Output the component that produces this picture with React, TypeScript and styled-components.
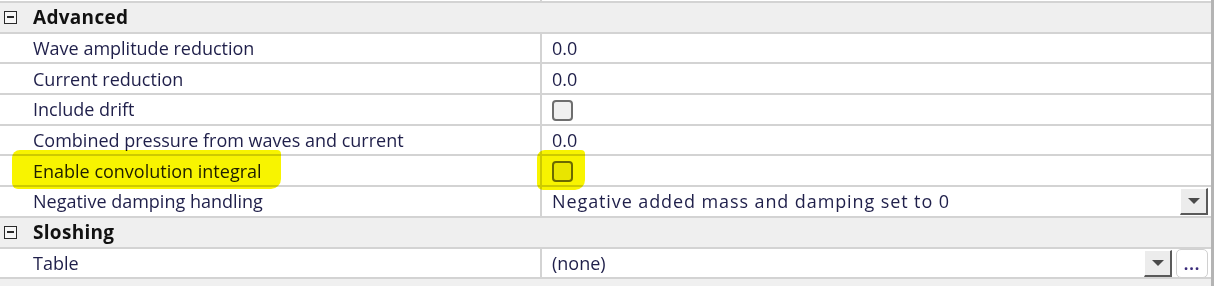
import React from "react";
import styled, { createGlobalStyle } from "styled-components";

const GlobalStyle = createGlobalStyle`
  html, body {
    margin: 0;
    padding: 0;
    background: #ffffff;
  }
  body {
    font-family: "Open Sans", "Noto Sans", sans-serif;
  }
`;

const LINE = "#d3d3d3";
const ROW_H = 28.7;

const Frame = styled.div`
  position: relative;
  width: 1218px;
  height: 286px;
  overflow: hidden;
  background: #ffffff;
`;

const Grid = styled.div`
  width: 1211px;
  height: 286px;
  background: #f0f0f0;
  border-right: 3px solid #b4b4b4;
  display: flex;
  flex-direction: column;
`;

const TopStrip = styled.div`
  height: 1px;
  display: grid;
  grid-template-columns: 540px 1fr;
  background: #ffffff;
  border-bottom: 2px solid ${LINE};
  & > div + div {
    border-left: 2px solid ${LINE};
  }
`;

const CategoryRow = styled.div`
  height: ${ROW_H}px;
  border-bottom: 2px solid ${LINE};
  background: #efefef;
  display: flex;
  align-items: center;
  padding-left: 4px;
  gap: 16px;
`;

const ToggleBox = styled.span`
  width: 11px;
  height: 11px;
  border: 1.5px solid #2a2a2a;
  position: relative;
  background: #f7f7f7;
  &::after {
    content: "";
    position: absolute;
    left: 2px;
    right: 2px;
    top: 4.5px;
    height: 2px;
    background: #2a2a2a;
  }
`;

const CategoryLabel = styled.span`
  font-size: 19px;
  font-weight: 700;
  color: #111111;
  letter-spacing: 0.3px;
`;

const PropertyRow = styled.div`
  height: ${ROW_H}px;
  border-bottom: 2px solid ${LINE};
  background: #ffffff;
  display: grid;
  grid-template-columns: 540px 1fr;
`;

const LabelCell = styled.div`
  display: flex;
  align-items: center;
  padding-left: 33px;
  font-size: 18px;
  color: #1f1f4a;
  white-space: nowrap;
`;

const ValueCell = styled.div`
  display: flex;
  align-items: center;
  border-left: 2px solid ${LINE};
  padding-left: 10px;
  padding-right: 3px;
  font-size: 18px;
  color: #1f1f4a;
  gap: 4px;
`;

const ValueText = styled.span<{ $wide?: boolean }>`
  flex: 1;
  white-space: nowrap;
  letter-spacing: ${(p) => (p.$wide ? "0.9px" : "0")};
`;

const Check = styled.span`
  width: 17px;
  height: 17px;
  border: 2px solid #6e6e6e;
  border-radius: 4px;
  background: #f0f0f0;
  margin-top: 2px;
`;

const DropButton = styled.span`
  width: 28px;
  height: 27px;
  box-sizing: border-box;
  background: #ececec;
  border-top: 1px solid #ffffff;
  border-left: 1px solid #ffffff;
  border-right: 2px solid #5a5a5a;
  border-bottom: 2px solid #5a5a5a;
  display: flex;
  align-items: center;
  justify-content: center;
  &::after {
    content: "";
    border-left: 6px solid transparent;
    border-right: 6px solid transparent;
    border-top: 6px solid #4a4a4a;
  }
`;

const EllipsisButton = styled.span`
  width: 32px;
  height: 29px;
  box-sizing: border-box;
  border: 1px solid #d0d0d0;
  border-radius: 5px;
  background: #ffffff;
  display: flex;
  align-items: flex-end;
  justify-content: center;
  padding-bottom: 5px;
  font-size: 16px;
  font-weight: 700;
  letter-spacing: 1px;
  color: #3a2a7a;
  line-height: 1;
`;

const Highlight = styled.div<{ $left: number; $top: number; $width: number; $height: number }>`
  position: absolute;
  left: ${(p) => p.$left}px;
  top: ${(p) => p.$top}px;
  width: ${(p) => p.$width}px;
  height: ${(p) => p.$height}px;
  background: #f8f400;
  mix-blend-mode: multiply;
  border-radius: 8px 4px 10px 6px;
  pointer-events: none;
`;

type Prop = {
  label: string;
  value?: string;
  kind?: "text" | "check" | "drop" | "dropEllipsis";
};

const advanced: Prop[] = [
  { label: "Wave amplitude reduction", value: "0.0" },
  { label: "Current reduction", value: "0.0" },
  { label: "Include drift", kind: "check" },
  { label: "Combined pressure from waves and current", value: "0.0" },
  { label: "Enable convolution integral", kind: "check" },
  { label: "Negative damping handling", value: "Negative added mass and damping set to 0", kind: "drop" },
];

const sloshing: Prop[] = [{ label: "Table", value: "(none)", kind: "dropEllipsis" }];

function PropertyLine({ p }: { p: Prop }) {
  return (
    <PropertyRow>
      <LabelCell>{p.label}</LabelCell>
      <ValueCell>
        {p.kind === "check" ? (
          <Check />
        ) : (
          <ValueText $wide={p.kind === "drop"}>{p.value}</ValueText>
        )}
        {p.kind === "drop" && <DropButton />}
        {p.kind === "dropEllipsis" && (
          <>
            <DropButton />
            <EllipsisButton>...</EllipsisButton>
          </>
        )}
      </ValueCell>
    </PropertyRow>
  );
}

function Category({ title }: { title: string }) {
  return (
    <CategoryRow>
      <ToggleBox />
      <CategoryLabel>{title}</CategoryLabel>
    </CategoryRow>
  );
}

export default function App() {
  return (
    <Frame>
      <GlobalStyle />
      <Grid>
        <TopStrip>
          <div />
          <div />
        </TopStrip>
        <Category title="Advanced" />
        {advanced.map((p) => (
          <PropertyLine key={p.label} p={p} />
        ))}
        <Category title="Sloshing" />
        {sloshing.map((p) => (
          <PropertyLine key={p.label} p={p} />
        ))}
      </Grid>
      <Highlight $left={12} $top={150} $width={269} $height={39} />
      <Highlight $left={537} $top={150} $width={48} $height={40} />
    </Frame>
  );
}
